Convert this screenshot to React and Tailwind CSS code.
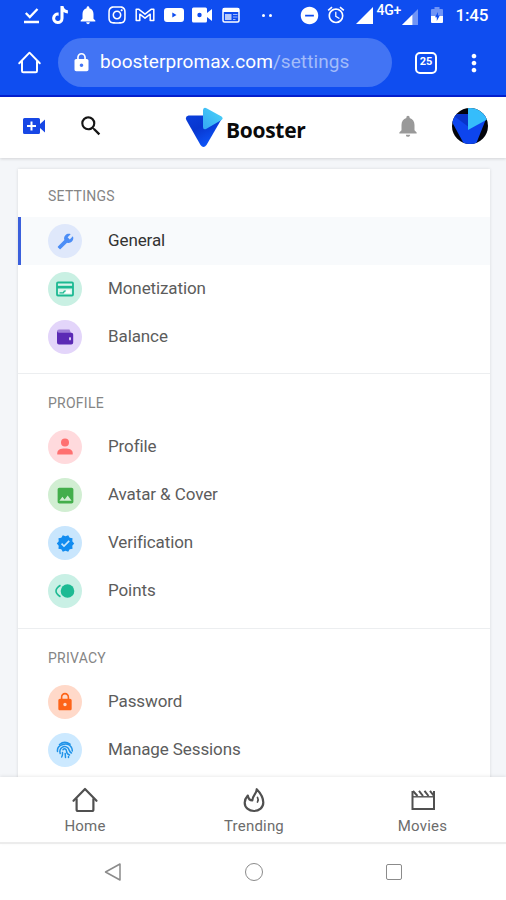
import {
  MdAlarm,
  MdBuild,
  MdDoNotDisturbOn,
  MdImage,
  MdLock,
  MdMoreVert,
  MdNotifications,
  MdSearch,
  MdVerified,
} from "react-icons/md";
import { FaInstagram, FaTiktok } from "react-icons/fa";

const DoneIcon = () => (
  <svg viewBox="0 0 20 20" className="size-5" fill="none" stroke="currentColor" strokeWidth="2.3">
    <path d="m4.8 8 4 4 7.7-8M3 17h15" />
  </svg>
);

const GmailIcon = () => (
  <svg viewBox="0 0 20 20" className="size-5" fill="none" stroke="currentColor" strokeWidth="1.5">
    <path d="M1.2 4.2v11.4h3.6V9.2l5.2 4 5.2-4v6.4h3.6V4.2h-2.4L10 9.2 3.6 4.2z" strokeLinejoin="round" />
  </svg>
);

const YoutubeIcon = () => (
  <svg viewBox="0 0 20 20" className="size-5" fill="currentColor" fillRule="evenodd">
    <path d="M3 3h14q3 0 3 3v8q0 3-3 3H3q-3 0-3-3V6q0-3 3-3zm5.3 4.5v5l4.2-2.5z" />
  </svg>
);

const RecorderIcon = () => (
  <svg viewBox="0 0 20 20" className="size-5" fill="currentColor" fillRule="evenodd">
    <path d="M1.5 2.5h12Q15 2.5 15 4v4l5-4v12l-5-4v4q0 1.5-1.5 1.5h-12Q0 17.5 0 16V4q0-1.5 1.5-1.5zm6 5.3a2.2 2.2 0 1 0 0 4.4 2.2 2.2 0 0 0 0-4.4z" />
  </svg>
);

const NewsIcon = () => (
  <svg viewBox="0 0 20 20" className="size-5">
    <rect x="2" y="3.5" width="16" height="13.5" rx="1.5" fill="none" stroke="currentColor" strokeWidth="1.5" />
    <path d="M2 3h16v4H2z" fill="currentColor" />
    <path d="M4 9h6.5v6H4z" fill="currentColor" opacity=".7" />
    <path d="M12 9.5h4.5M12 12h4.5M12 14.5h2.5" stroke="currentColor" opacity=".6" />
  </svg>
);

const BatteryIcon = () => (
  <svg viewBox="0 0 14 20" className="h-5 w-3.5">
    <path d="M4.5 2h5v2H12q1 0 1 1v7H1V5q0-1 1-1h2.5z" fill="currentColor" opacity=".4" />
    <path d="M1 11h12v6q0 1-1 1H2q-1 0-1-1z" fill="currentColor" />
    <path d="M8 7 5 12.3h1.8V16l3-5.5H8z" fill="#0f4df0" />
  </svg>
);

const HomeIcon = ({ className }) => (
  <svg viewBox="0 0 28 28" className={className} fill="none" stroke="currentColor" strokeWidth="2.2" strokeLinejoin="round" strokeLinecap="round">
    <path d="M5.6 13v10.5q0 1.5 1.5 1.5h13.8q1.5 0 1.5-1.5V13" />
    <path d="M2.5 14.8 14 3l11.5 11.8" />
  </svg>
);

const FlameIcon = ({ className }) => (
  <svg viewBox="0 0 28 28" className={className} fill="none" stroke="currentColor" strokeWidth="2.2" strokeLinejoin="round" strokeLinecap="round">
    <path d="M7.8 9.5C5.5 12 4.7 14.3 4.7 16.8c0 4.8 4 8.2 9.3 8.2s9.3-3.4 9.3-8.4c0-5-3-9.8-6.6-13.4.3 4.3-4.2 6-4.4 11.3-2.5 0-4-2-4.5-5z" />
    <path d="M17.5 11.5q1.2 2 0 4.5" strokeWidth="1.7" />
  </svg>
);

const MovieIcon = ({ className }) => (
  <svg viewBox="0 0 28 28" className={className} fill="none" stroke="currentColor" strokeWidth="2">
    <path d="M3.5 5v18H25V5" />
    <path d="M3.5 10.8H25" strokeWidth="1.4" />
    <path d="m4 5 4.5 5M10 4.8l4 5.2M15.5 4.8l4 5.2M21 4.8l4 5.2" strokeWidth="2" />
  </svg>
);

const CardIcon = () => (
  <svg viewBox="0 0 18 18" className="size-[18px]">
    <rect x="1" y="2.5" width="16" height="13" rx="1" fill="#d9f5ec" stroke="currentColor" strokeWidth="1.8" />
    <path d="M1 5.8h16v2.7H1z" fill="currentColor" />
    <path d="M3.5 12.8h3.8l1-1.6h2" fill="none" stroke="currentColor" strokeWidth="1.3" />
    <path d="M10 10.3h4.5v3H9z" fill="#fff" />
  </svg>
);

const WalletIcon = () => (
  <svg viewBox="0 0 18 18" className="size-[18px]">
    <path d="M3 1.5h10.5L15 5H1V3.5q0-2 2-2z" fill="currentColor" opacity=".5" />
    <path d="M1 3q.3 1.8 2 1.8h12.5q1.700 0 1.700 1.700v8q0 2-2 2H3q-2 0-2-2z" fill="currentColor" />
    <ellipse cx="14" cy="10.8" rx="1" ry="1.7" fill="#e5d7fa" />
  </svg>
);

const PersonIcon = () => (
  <svg viewBox="0 0 18 18" className="size-[18px]" fill="currentColor">
    <circle cx="9" cy="4.6" r="4" />
    <path d="M1.3 16.5v-1.2c0-3.5 3-4.8 7.7-4.8s7.7 1.3 7.7 4.8v1.2z" />
  </svg>
);

const PointsIcon = () => (
  <svg viewBox="0 0 20 18" className="h-[18px] w-5">
    <circle cx="12.5" cy="9" r="6.8" fill="currentColor" />
    <path d="M5.5 3.2Q1 6 1 9t4.5 5.8" fill="none" stroke="currentColor" strokeWidth="1.6" />
  </svg>
);

const FingerprintIcon = () => (
  <svg viewBox="0 0 18 18" className="size-[18px]" fill="none" stroke="currentColor" strokeWidth="1.5" strokeLinecap="round">
    <path d="M3.500 3.500Q8.500-.6 14 3.200" />
    <path d="M1.500 10.500C.5 3 12 .5 15.500 6.500q.8 1.500.8 3.500" />
    <path d="M4.200 12.500C2.500 6.500 8.500 3.800 11.800 6.800c1.700 1.700 1.200 4.200 3.700 5.200" />
    <path d="M7 8.800c1.500-2 3.400-.6 3.500 1.200.1 2 1.500 3.500 3 4" />
    <path d="M6.500 11.500q.3 2.300-.8 4.500M9.200 12.500l.3 4M12.500 15.500v1" />
  </svg>
);

const BoosterMark = ({ className }) => (
  <svg viewBox="0 0 38 41" className={className}>
    <defs>
      <linearGradient id="markBlue" x1="0" y1="0" x2=".6" y2="1">
        <stop offset="0" stopColor="#0a3fdc" />
        <stop offset=".45" stopColor="#0836cf" />
        <stop offset="1" stopColor="#0d57fb" />
      </linearGradient>
      <linearGradient id="markCyan" x1="0" y1="1" x2="1" y2="0">
        <stop offset="0" stopColor="#35a8f5" />
        <stop offset="1" stopColor="#4cd5f7" />
      </linearGradient>
    </defs>
    <path d="M3.5 8.5h30q4 1 2.5 4.5L21.5 38q-3 4-6 0L1.3 13q-1.5-3.5 2.2-4.5z" fill="url(#markBlue)" />
    <path d="M18 3q.5-3 3.5-1.8L36.5 9.5q2 1.5 0 3.5L21 22q-3 1-3-2z" fill="url(#markCyan)" />
  </svg>
);

const sections = [
  {
    title: "Settings",
    items: [
      { label: "General", icon: <MdBuild className="size-[17px] -scale-x-100" />, color: "bg-[#dfe8fb] text-[#4b8df6]", active: true },
      { label: "Monetization", icon: <CardIcon />, color: "bg-[#c9f0e3] text-[#1cb992]" },
      { label: "Balance", icon: <WalletIcon />, color: "bg-[#e3d5fa] text-[#5b2ab5]" },
    ],
  },
  {
    title: "Profile",
    items: [
      { label: "Profile", icon: <PersonIcon />, color: "bg-[#ffdadd] text-[#ff7070]" },
      { label: "Avatar & Cover", icon: <MdImage className="size-[21px]" />, color: "bg-[#d1eed2] text-[#43ae4b]" },
      { label: "Verification", icon: <MdVerified className="size-[19px]" />, color: "bg-[#c9e6fd] text-[#128cf0]" },
      { label: "Points", icon: <PointsIcon />, color: "bg-[#c9f0e5] text-[#1dba93]" },
    ],
  },
  {
    title: "Privacy",
    items: [
      { label: "Password", icon: <MdLock className="size-5" />, color: "bg-[#ffd9c9] text-[#fd6418]" },
      { label: "Manage Sessions", icon: <FingerprintIcon />, color: "bg-[#cce9ff] text-[#2093e8]" },
    ],
  },
];

const tabs = [
  { label: "Home", icon: HomeIcon },
  { label: "Trending", icon: FlameIcon },
  { label: "Movies", icon: MovieIcon },
];

function StatusBar() {
  return (
    <div className="flex h-[30px] items-center pl-[21px]">
      <div className="flex items-center gap-[8.5px]">
        <DoneIcon />
        <FaTiktok className="size-5 p-px" />
        <MdNotifications className="-mx-px size-[22px]" />
        <FaInstagram className="size-5" />
        <GmailIcon />
        <YoutubeIcon />
        <RecorderIcon />
        <NewsIcon />
      </div>
      <div className="ml-[21px] flex gap-1">
        <i className="size-[3px] rounded-full bg-white" />
        <i className="size-[3px] rounded-full bg-white" />
      </div>
      <MdDoNotDisturbOn className="ml-[27px] size-[21px]" />
      <MdAlarm className="ml-[6px] size-5" />
      <svg viewBox="0 0 17 17" className="ml-[10px] size-[17px]" fill="currentColor">
        <path d="M17 0v17H0z" />
      </svg>
      <span className="ml-1 w-[25px] pb-2.5 text-[14px] font-medium leading-none tracking-[-0.3px]">4G+</span>
      <svg viewBox="0 0 17 17" className="mt-1 size-[16px]" fill="currentColor">
        <path d="M17 0v17H0z" opacity=".4" />
        <path d="M11 6v11H0z" />
      </svg>
      <span className="ml-[12px]">
        <BatteryIcon />
      </span>
      <span className="ml-[12px] text-[17px] font-medium leading-none tracking-[-0.2px]">1:45</span>
    </div>
  );
}

function AddressBar() {
  return (
    <div className="flex h-[65px] items-center pl-[17px]">
      <HomeIcon className="size-[25px]" />
      <div className="ml-4 flex h-[49px] w-[334px] items-center rounded-full bg-[#4274f4] pl-[13px]">
        <MdLock className="size-[21px]" />
        <span className="ml-2 text-[19px] tracking-[0.08px]">
          boosterpromax.com<span className="text-[#a3bcfa]">/settings</span>
        </span>
      </div>
      <span className="ml-[23px] flex size-[22px] items-center justify-center rounded-[5px] border-2 border-white text-[11px] font-bold">
        25
      </span>
      <MdMoreVert className="ml-[23px] size-7" />
    </div>
  );
}

function SiteHeader() {
  return (
    <header className="relative z-10 flex h-[61px] items-center bg-white pb-[3px] shadow-[0_1px_3px_rgba(0,0,0,0.14)]">
      <svg viewBox="0 0 22 16" className="ml-[23px] h-4 w-[22px]">
        <path d="M1.5 0h14q1.5 0 1.5 1.5V6l5-4.5v13L17 10v4.5q0 1.5-1.5 1.5h-14Q0 16 0 14.5v-13Q0 0 1.5 0z" fill="#1747e5" />
        <path d="M8.5 3.5v9M4 8h9" stroke="#fff" strokeWidth="2" />
      </svg>
      <MdSearch className="ml-[33px] size-[26px] text-[#151515]" />
      <BoosterMark className="ml-[81px] mt-0.5 h-[41px] w-[38px]" />
      <span className="ml-[3px] mt-2 w-[82px] font-['Open_Sans',sans-serif] text-[21px] font-bold leading-none tracking-[-0.3px] text-[#0a0a0a]">
        Booster
      </span>
      <MdNotifications className="ml-[87px] size-[26px] text-[#999]" />
      <svg viewBox="0 0 36 36" className="ml-[31px] size-9 rounded-full">
        <path d="M0 0h36v36H0z" fill="#03040b" />
        <path d="M0 10q2-4 7-4h29L24 36H12L0 14z" fill="#0d45ee" />
        <path d="M2 8 18 20 16 6H6z" fill="#0834c9" />
        <path d="M16 0h12q5 4 8 11L16 22z" fill="#35bdfb" />
      </svg>
    </header>
  );
}

function SettingsItem({ item }) {
  return (
    <li
      className={`flex h-12 items-center border-l-[3px] pl-[27px] ${
        item.active ? "border-[#3a5fdc] bg-[#f8fafc] text-[#333]" : "border-transparent text-[#5c5c5c]"
      }`}
    >
      <span className={`flex size-[34px] items-center justify-center rounded-full ${item.color}`}>{item.icon}</span>
      <span className="ml-[26px] pb-px text-[17px] leading-none tracking-[-0.1px]">{item.label}</span>
    </li>
  );
}

export default function App() {
  return (
    <div className="flex h-[900px] w-[506px] flex-col overflow-hidden bg-[#f4f6f9] font-[Roboto,sans-serif]">
      <div className="h-[97px] shrink-0 border-b-2 border-[#0520cf] bg-[#0f4df0] text-white">
        <StatusBar />
        <AddressBar />
      </div>
      <SiteHeader />

      <main className="min-h-0 flex-1 overflow-hidden pl-[18px] pr-4 pt-[11px]">
        <div className="bg-white shadow-[0_0_3px_rgba(0,0,0,0.12)]">
          {sections.map((section, i) => (
            <section key={section.title} className={`border-b border-[#eceef0] ${i === 0 ? "pb-3" : "pb-[13px]"}`}>
              <h2
                className={`flex items-center pl-[30px] text-[14px] font-normal uppercase leading-none tracking-[0.25px] text-[#858585] ${
                  i === 0 ? "h-12 pt-[5px]" : "h-[49px] pt-2"
                }`}
              >
                {section.title}
              </h2>
              <ul>
                {section.items.map((item) => (
                  <SettingsItem key={item.label} item={item} />
                ))}
              </ul>
            </section>
          ))}
        </div>
      </main>

      <nav className="relative z-10 grid h-[67px] shrink-0 grid-cols-[169px_169px_168px] border-b-2 border-[#ececec] bg-white shadow-[0_-1px_3px_rgba(0,0,0,0.08)]">
        {tabs.map(({ label, icon: Icon }) => (
          <a key={label} className="flex flex-col items-center pl-px pt-[9px] text-[#505050]">
            <Icon className="size-7" />
            <span className="mt-[5px] text-[15px] leading-none tracking-[0.2px] text-[#6c6c6c]">{label}</span>
          </a>
        ))}
      </nav>

      {/* Android navigation keys */}
      <div className="flex h-14 shrink-0 items-center justify-center gap-[123px] bg-white text-[#8b8b8b]">
        <svg viewBox="0 0 18 18" className="size-[18px]" fill="none" stroke="currentColor" strokeWidth="1.5">
          <path d="M16 1v16L1.5 9z" strokeLinejoin="round" />
        </svg>
        <i className="size-[18px] rounded-full border-[1.5px] border-current" />
        <i className="size-4 rounded-[2px] border-[1.5px] border-current" />
      </div>
    </div>
  );
}
